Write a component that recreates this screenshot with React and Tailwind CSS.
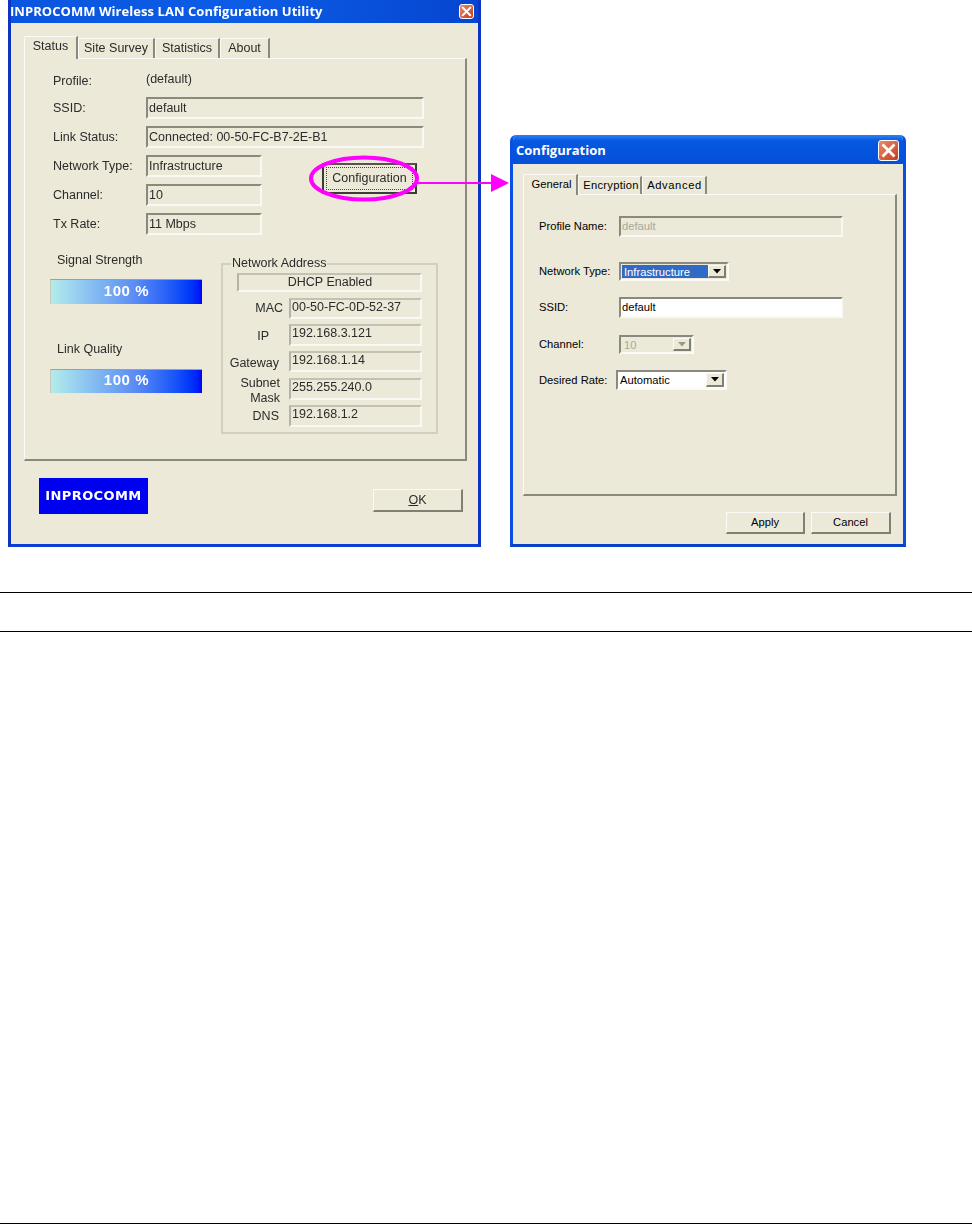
import React from "react";

const Sunken = ({ className = "", light, children }) => (
  <div className={"box-border flex items-center pl-[1px] border-2 " + (light ? "border-t-[#c2c1b3] border-l-[#b4b3a5] border-b-[#f9f8f2] border-r-[#f9f8f2] " : "border-t-[#8a897d] border-l-[#8a897d] border-b-[#f9f8f2] border-r-[#f9f8f2] ") + className}>
    {children}
  </div>
);

const Raised = ({ className = "", children }) => (
  <div className={"box-border flex items-center justify-center border border-t-[#fbfaf5] border-l-[#fbfaf5] border-b-2 border-r-2 border-b-[#807f74] border-r-[#807f74] bg-[#ece9d8] " + className}>
    {children}
  </div>
);

const Tab = ({ active, className = "", children }) => (
  <div
    className={
      "box-border flex items-center justify-center border-l border-t border-[#fbfaf5] border-r-2 border-r-[#8a897d] rounded-tl-[2px] " +
      (active ? "relative z-10 -mb-px bg-[#ece9d8] " : "") +
      className
    }
  >
    {children}
  </div>
);

const Row = ({ label, children }) => (
  <div className="flex items-center h-[22px] mt-[7px]">
    <div className="w-[93px] shrink-0">{label}</div>
    {children}
  </div>
);

const Close = ({ className = "", iconClass = "w-[11px] h-[11px]" }) => (
  <div className={"box-border flex items-center justify-center rounded-[3px] border border-white bg-linear-to-br from-[#e88a6c] to-[#c6381a] " + className}>
    <svg viewBox="0 0 12 12" className={iconClass}>
      <path d="M2 2 L10 10 M10 2 L2 10" stroke="#fff" strokeWidth="2.2" strokeLinecap="square" fill="none" />
    </svg>
  </div>
);

const Arrow = ({ muted }) => (
  <div className="box-border flex items-center justify-center w-[18px] h-full border border-t-[#fbfaf5] border-l-[#fbfaf5] border-b-2 border-r-2 border-b-[#807f74] border-r-[#807f74] bg-[#ece9d8] shrink-0">
    <svg viewBox="0 0 8 5" className="w-[8px] h-[5px]">
      <path d="M0 0 H8 L4 4.5 Z" fill={muted ? "#9a998e" : "#000"} />
    </svg>
  </div>
);

const Bar = ({ className = "" }) => (
  <div className={"box-border flex items-center justify-center w-[152px] pb-[2px] border-t border-l border-t-[#a09f94] border-l-[#c8c7bc] bg-linear-to-r from-[#b4ecea] via-[#5d8cf4] via-55% to-[#0000f8] text-white font-bold text-[15px] tracking-[0.6px] " + className}>
    100 %
  </div>
);

const values = { MAC: "00-50-FC-0D-52-37", IP: "192.168.3.121", Gateway: "192.168.1.14", Subnet: "255.255.240.0", DNS: "192.168.1.2" };
const text = (l) => values[typeof l === "string" ? l : "Subnet"];

const AddressRow = ({ label, labelClass, boxClass }) => (
  <div className={"flex " + boxClass}>
    <div className={"w-[63px] shrink-0 flex flex-col justify-center leading-[15px] " + labelClass}>{label}</div>
    <Sunken light className="w-[133px] h-full items-start">
      <span className="leading-[15px]">{text(label)}</span>
    </Sunken>
  </div>
);

function StatusWindow() {
  return (
    <div className="box-border w-[473px] h-[547px] flex flex-col border-x-[3px] border-b-[3px] border-x-[#0c35c4] border-b-[#0b3ed6] bg-[#ece9d8] text-[12.5px] text-[#2b2b2b] blur-[0.35px] font-['Liberation_Sans',sans-serif]">
      <div className="h-[23px] shrink-0 flex items-center justify-between pr-[4px] bg-linear-to-r from-[#0a55e0] via-[#0d5ce6] to-[#0645cf] text-white font-bold text-[13px] tracking-[0.05px] font-['Open_Sans',sans-serif]">
        <span className="-ml-px">INPROCOMM Wireless LAN Configuration Utility</span>
        <Close className="w-[15px] h-[15px]" />
      </div>
      <div className="flex-1 flex flex-col pl-[13px] pt-[13px]">
        <div className="flex items-end h-[22px]">
          <Tab active className="w-[54px] h-[23px] pb-[3px]">Status</Tab>
          <Tab className="w-[77px] h-[20px]">Site Survey</Tab>
          <Tab className="w-[65px] h-[20px]">Statistics</Tab>
          <Tab className="w-[50px] h-[20px]">About</Tab>
        </div>
        <div className="box-border w-[443px] h-[403px] border-l border-t border-l-[#fbfaf5] border-t-[#fbfaf5] border-r-2 border-b-2 border-r-[#8a897d] border-b-[#8a897d]">
          <div className="pl-[28px] pt-[4px]">
            <Row label="Profile:">
              <span className="-mt-[3px]">(default)</span>
            </Row>
            <div className="-mt-[2px]">
              <Row label="SSID:"><Sunken className="w-[278px] h-[22px]">default</Sunken></Row>
            </div>
            <Row label="Link Status:"><Sunken className="w-[278px] h-[22px]">Connected: 00-50-FC-B7-2E-B1</Sunken></Row>
            <div className="flex">
              <div className="w-[209px]">
                <Row label="Network Type:"><Sunken className="w-[116px] h-[22px]">Infrastructure</Sunken></Row>
                <Row label="Channel:"><Sunken className="w-[116px] h-[22px]">10</Sunken></Row>
                <Row label="Tx Rate:"><Sunken className="w-[116px] h-[22px]">11 Mbps</Sunken></Row>
              </div>
              <div className="box-border ml-[60px] mt-[15px] w-[95px] h-[31px] border-2 border-[#3c3c36] border-t-[#55544c] bg-[#ece9d8] p-[2px]">
                <div className="h-full flex items-center justify-center border border-dotted border-[#444]">Configuration</div>
              </div>
            </div>
          </div>
          <div className="flex pl-[25px] mt-[15px]">
            <div className="w-[152px] flex flex-col mt-[1px]">
              <div className="h-[20px] pl-[7px] pb-[2px] flex items-center">Signal Strength</div>
              <Bar className="h-[25px] mt-[8px]" />
              <div className="h-[20px] pl-[7px] pb-[2px] flex items-center mt-[36px]">Link Quality</div>
              <Bar className="h-[24px] mt-[9px]" />
            </div>
            <div className="relative box-border ml-[19px] mt-[13px] w-[217px] h-[171px] border-2 border-[#d0cfc2] pl-[14px] pt-[8px]">
              <span className="absolute left-[8px] -top-[9px] px-[1px] leading-[14px] bg-[#ece9d8]">Network Address</span>
              <Sunken light className="w-[185px] h-[19px] justify-center">DHCP Enabled</Sunken>
              <div className="-ml-[11px]">
                <AddressRow label="MAC" labelClass="items-end pr-[6px]" boxClass="mt-[6px] h-[21px]" />
                <AddressRow label="IP" labelClass="items-end pr-[20px] pt-[2px]" boxClass="mt-[5px] h-[22px]" />
                <AddressRow label="Gateway" labelClass="items-end pr-[10px] pt-[3px]" boxClass="mt-[5px] h-[21px]" />
                <AddressRow label={<><span>Subnet</span><span>Mask</span></>} labelClass="items-end pr-[9px] pt-[3px] text-center" boxClass="mt-[6px] h-[22px]" />
                <AddressRow label="DNS" labelClass="items-end pr-[10px]" boxClass="mt-[5px] h-[22px]" />
              </div>
            </div>
          </div>
        </div>
        <div className="flex items-start">
          <div className="ml-[15px] mt-[17px] w-[109px] h-[36px] flex items-center justify-center bg-[#0000f0] text-white font-bold text-[13px] tracking-[0.4px] font-['DejaVu_Sans',sans-serif]">INPROCOMM</div>
          <Raised className="ml-[225px] mt-[28px] w-[90px] h-[23px]"><span className="underline">O</span>K</Raised>
        </div>
      </div>
    </div>
  );
}

const CfgRow = ({ label, className = "", children }) => (
  <div className={"flex items-center " + className}>
    <div className="w-[80px] shrink-0">{label}</div>
    {children}
  </div>
);

function ConfigWindow() {
  return (
    <div className="box-border w-[396px] h-[412px] flex flex-col rounded-t-[6px] overflow-hidden border-x-[3px] border-b-[3px] border-x-[#0a4fe4] border-b-[#0840c8] bg-[#ece9d8] text-[11.2px] text-black font-['Liberation_Sans',sans-serif]">
      <div className="h-[29px] shrink-0 flex items-center justify-between pl-[3px] pr-[4px] bg-linear-to-b from-[#2f80f4] via-[#0558e2] via-20% to-[#0450d8] text-white font-bold text-[13px] font-['Open_Sans',sans-serif]">
        <span className="pt-[3px]">Configuration</span>
        <Close className="w-[21px] h-[21px] mt-[2px]" iconClass="w-[15px] h-[15px]" />
      </div>
      <div className="flex-1 flex flex-col pl-[10px] pt-[11px]">
        <div className="flex items-end h-[19px]">
          <Tab active className="w-[55px] h-[21px] pb-[2px] pl-[3px]">General</Tab>
          <Tab className="w-[64px] h-[18px] tracking-[0.25px] pl-[3px]">Encryption</Tab>
          <Tab className="w-[65px] h-[18px] tracking-[0.6px] pl-[1px]">Advanced</Tab>
        </div>
        <div className="box-border w-[374px] h-[302px] border-l border-t border-l-[#fbfaf5] border-t-[#fbfaf5] border-r-2 border-b-2 border-r-[#8a897d] border-b-[#8a897d] pl-[15px] pt-[21px]">
          <CfgRow label="Profile Name:" className="h-[21px]">
            <Sunken className="w-[224px] h-[21px] text-[#a9a89c] items-start pt-[1px]"><span className="-mt-[1px]">default</span></Sunken>
          </CfgRow>
          <CfgRow label="Network Type:" className="h-[19px] mt-[25px]">
            <div className="box-border flex w-[110px] h-[19px] border-2 border-t-[#8a897d] border-l-[#8a897d] border-b-[#fbfaf5] border-r-[#fbfaf5] p-px">
              <div className="flex-1 bg-[#316ac5] text-white leading-[14px] pl-[2px]">Infrastructure</div>
              <Arrow />
            </div>
          </CfgRow>
          <CfgRow label="SSID:" className="h-[21px] mt-[16px]">
            <Sunken className="w-[224px] h-[21px] bg-white items-start"><span>default</span></Sunken>
          </CfgRow>
          <CfgRow label="Channel:" className="h-[19px] mt-[17px]">
            <div className="box-border flex w-[75px] h-[19px] border-2 border-t-[#8a897d] border-l-[#8a897d] border-b-[#fbfaf5] border-r-[#fbfaf5] p-px">
              <div className="flex-1 text-[#a9a89c] leading-[14px] pl-[2px]">10</div>
              <Arrow muted />
            </div>
          </CfgRow>
          <CfgRow label="Desired Rate:" className="h-[20px] mt-[16px]">
            <div className="box-border flex -ml-[3px] w-[111px] h-[20px] border-2 border-t-[#8a897d] border-l-[#8a897d] border-b-[#fbfaf5] border-r-[#fbfaf5] bg-white p-px">
              <div className="flex-1 leading-[15px] pl-[1px]">Automatic</div>
              <Arrow />
            </div>
          </CfgRow>
        </div>
        <div className="flex justify-end gap-[6px] pr-[12px] mt-[16px]">
          <Raised className="w-[79px] h-[22px] pb-[1px]">Apply</Raised>
          <Raised className="w-[80px] h-[22px] pb-[1px]">Cancel</Raised>
        </div>
      </div>
    </div>
  );
}

export default function App() {
  return (
    <div className="relative min-h-[1224px] bg-white flex flex-col">
      <div className="flex items-end gap-[29px] pl-[8px]">
        <StatusWindow />
        <ConfigWindow />
      </div>
      <div className="mt-[45px] h-[40px] border-y border-black"></div>
      <div className="mt-auto border-b border-black"></div>
      <svg className="absolute left-0 top-0 w-[972px] h-[560px] pointer-events-none" viewBox="0 0 972 560">
        <ellipse cx="364" cy="178.5" rx="53" ry="21" fill="none" stroke="#ff00ff" strokeWidth="4" />
        <path d="M417 183 H492" stroke="#ff00ff" strokeWidth="1.8" fill="none" />
        <path d="M491 174 L509 183 L491 192 Z" fill="#ff00ff" />
      </svg>
    </div>
  );
}
